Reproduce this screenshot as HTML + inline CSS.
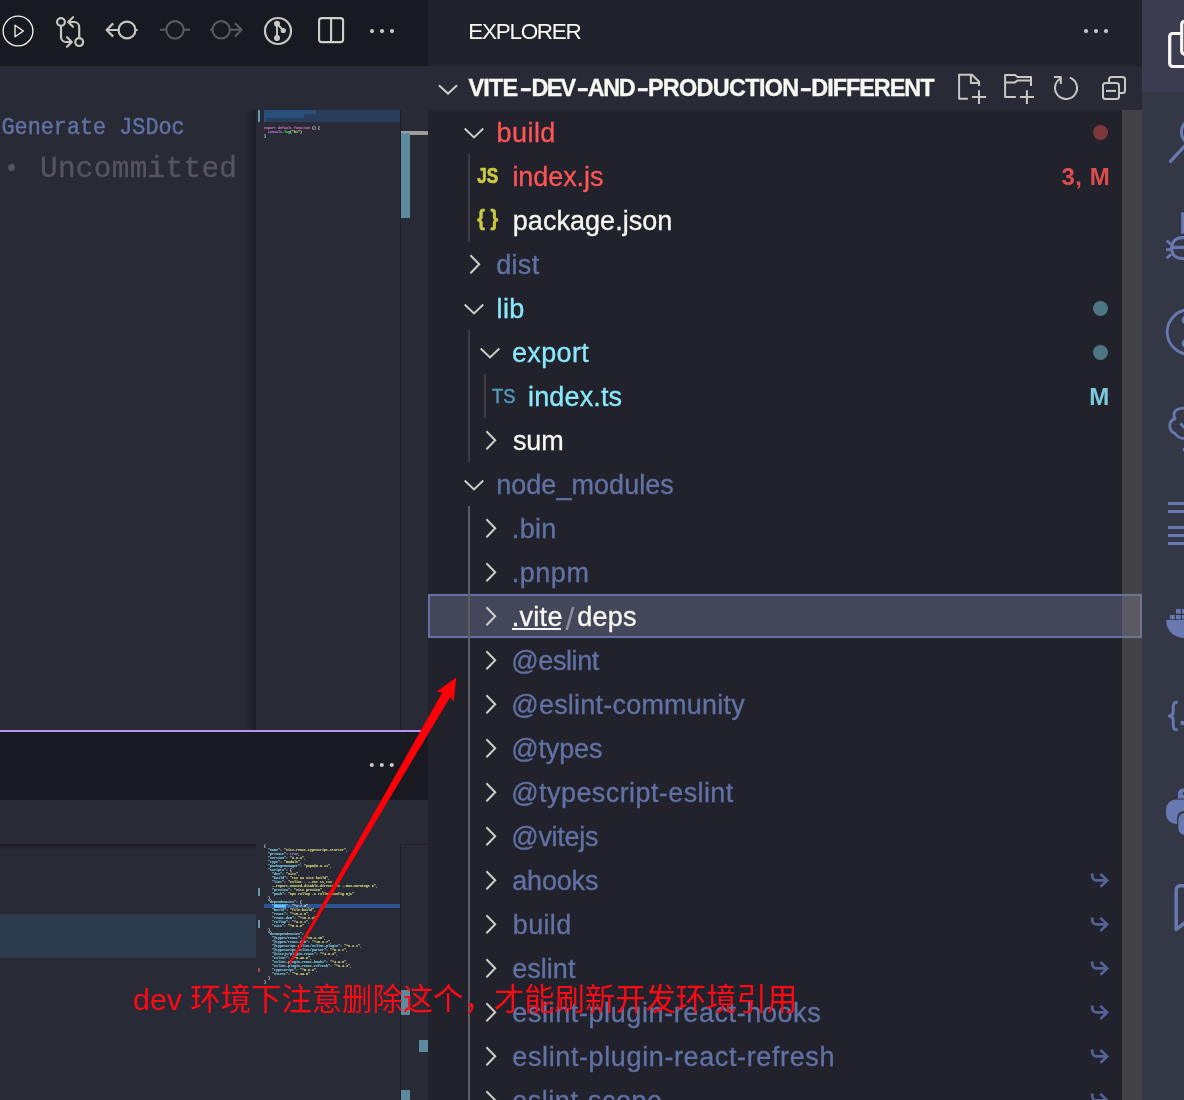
<!DOCTYPE html>
<html lang="zh">
<head>
<meta charset="utf-8">
<title>Explorer - vite-dev-and-production-different</title>
<style>
*{box-sizing:border-box;margin:0;padding:0}
html,body{width:1184px;height:1100px;overflow:hidden;background:#282a36}
body{position:relative;font-family:"Liberation Sans","Noto Sans CJK SC",sans-serif;color:#f8f8f2}
.abs{position:absolute}
#side,#left,#act,#note{will-change:transform}
svg{position:absolute;overflow:visible}
/* ---------- left editor area ---------- */
#left{position:absolute;left:0;top:0;width:428px;height:1100px;background:#282a36;overflow:hidden}
.tabbar{position:absolute;left:0;width:428px;background:#191a21}
.mono{font-family:"Liberation Mono","DejaVu Sans Mono",monospace;white-space:pre}
.codelens{-webkit-text-stroke:.4px;position:absolute;left:1.5px;top:114px;font-size:21.8px;line-height:26px;color:#6272a4;transform:scaleY(1.1);transform-origin:0 0}
.blame{-webkit-text-stroke:.3px;position:absolute;left:40px;top:153px;font-size:29.4px;line-height:34px;color:#55565f;letter-spacing:.3px}
.bullet{position:absolute;left:4px;top:152.8px;font-size:25px;line-height:34px;color:#55565f}
.mm{position:absolute;left:264px;font-size:3.34px;line-height:4px;height:4px;font-weight:bold}
.mm b{font-weight:bold}
.k{color:#8be9fd}.s{color:#f1fa8c}.p{color:#ff79c6}.v{color:#bd93f9}.g{color:#50fa7b}.w{color:#f8f8f2}
.mark{position:absolute;background:#5d8a9e}
/* ---------- sidebar ---------- */
#side{position:absolute;left:428px;top:0;width:714px;height:1100px;background:#21222c;overflow:hidden}
#side .title{position:absolute;left:40.3px;top:18.6px;font-size:22.5px;line-height:26px;letter-spacing:-1.3px;color:#f8f8f2;white-space:pre}
#side .sect{position:absolute;left:0;top:66px;width:714px;height:44px;background:#282a36}
#side .sect .name{position:absolute;left:0;top:9.3px;height:26px;font-size:23.4px;line-height:26px;font-weight:bold;color:#f8f8f2;white-space:pre}
#side .sect .name span{position:absolute;top:0;-webkit-text-stroke:.35px}
#side .sect .name .hy{display:inline-block;transform:scaleX(1.55);transform-origin:50% 50%}
.row{position:absolute;left:0;width:714px;height:44px;font-size:27px;line-height:44px;white-space:pre}
.row .lb{position:absolute;top:.5px;height:44px;-webkit-text-stroke:.3px}
.row .rt{position:absolute;top:.5px;height:44px;font-size:24px;font-weight:bold;opacity:.85}
.row.sel{background:#44475a;border:2px solid #6272a4}
.c-red{color:#ff5555}.c-cy{color:#8be9fd}.c-ig{color:#6272a4}.c-fg{color:#f8f8f2}
.guide{position:absolute;width:2px;background:#3d3d43}
.guide.on{background:#5f5f61}
.dot{position:absolute;left:664.5px;top:14.5px;width:15px;height:15px;border-radius:50%}
.sbar{position:absolute;left:694px;top:110px;width:20px;height:990px;background:rgba(127,123,120,.37)}
/* ---------- activity bar ---------- */
#act{position:absolute;left:1142px;top:0;width:42px;height:1100px;background:#343746;overflow:hidden}
#act .cur{position:absolute;left:0;top:0;width:42px;height:92px;background:#3c3d51}
/* ---------- annotation overlay ---------- */
#note{position:absolute;left:133.2px;top:979.5px;font-size:30.35px;line-height:40px;color:#ff0a14;white-space:pre;font-weight:400;font-family:"Liberation Sans","Noto Sans CJK SC",sans-serif}
</style>
</head>
<body>
<div id="left">
<div class="tabbar" style="top:0;height:66px"></div>
<svg width="428" height="66" viewBox="0 0 428 66" style="left:0;top:0" fill="none" stroke-linecap="round" stroke-linejoin="round">
<g stroke="#f8f8f2" stroke-width="1.3"><circle cx="18" cy="31" r="14.9"/><path d="M15 25.2V36.8L23.4 31Z"/></g>
<g stroke="#c6c6c2" stroke-width="2.2"><circle cx="61" cy="22" r="3.9"/><circle cx="79.2" cy="42.1" r="3.9"/><path d="M61 26.5V37a5 5 0 0 0 5 5H71M67 37.2L71.8 42L67 46.8"/><path d="M79.2 37.6V27a5 5 0 0 0-5-5H69M73 17.2L68.2 22L73 26.8"/></g>
<g stroke="#c6c6c2" stroke-width="2.2"><circle cx="127" cy="30" r="8.4"/><path d="M107 30H118.5M113.2 23.4L106.6 30L113.2 36.6M135.6 30H137.6" stroke-linecap="butt"/></g>
<g stroke="#5a5a60" stroke-width="2.1"><circle cx="175" cy="29.8" r="8.7"/><path d="M160 29.8H166M184 29.8H190" stroke-linecap="butt"/></g>
<g stroke="#5a5a60" stroke-width="2.1"><circle cx="221.2" cy="29.8" r="8.7"/><path d="M210 29.8H212.4M230 29.8H241M235 23.2L241.6 29.8L235 36.4" stroke-linecap="butt"/></g>
<g stroke="#c8c8c4" stroke-width="2.2"><circle cx="278" cy="31" r="13"/><path d="M277 23.7V38M277 23.7L283.3 30.5" stroke-width="1.9"/><g fill="#c8c8c4" stroke="none"><circle cx="277" cy="23.7" r="3"/><circle cx="277" cy="38" r="3"/><circle cx="283.3" cy="30.5" r="2.6"/></g></g>
<g stroke="#d0d0cc" stroke-width="2.1"><rect x="319.1" y="18.1" width="24" height="24" rx="2.6"/><path d="M331.1 18.1V42.1"/></g>
<g fill="#c8c8c8"><circle cx="372" cy="31.1" r="2.1"/><circle cx="382" cy="31.1" r="2.1"/><circle cx="392" cy="31.1" r="2.1"/></g>
</svg>
<div class="mono codelens">Generate JSDoc</div>
<div class="mono bullet">•</div><div class="mono blame">Uncommitted</div>
<div class="abs" style="left:244px;top:110px;width:12px;height:620px;background:linear-gradient(to right,rgba(0,0,0,0),rgba(0,0,0,.32))"></div>
<div class="abs" style="left:264px;top:110px;width:136px;height:12px;background:#2a3e5c"></div>
<div class="abs" style="left:264px;top:110px;width:52px;height:4px;background:#28507d"></div>
<div class="abs" style="left:264px;top:114px;width:40px;height:4px;background:#28507d"></div>
<div class="abs" style="left:264px;top:118px;width:2px;height:4px;background:#28507d"></div>
<div class="abs" style="left:258px;top:110px;width:2px;height:12px;background:#5f9ab0"></div>
<div class="mono mm" style="top:126px"><b class="p">export default function</b><b class="w"> () {</b></div>
<div class="mono mm" style="top:130px"><b class="w">  </b><b class="v">console</b><b class="w">.</b><b class="g">log</b><b class="w">(</b><b class="s">&quot;hi&quot;</b><b class="w">)</b></div>
<div class="mono mm" style="top:134px"><b class="w">}</b></div>
<div class="abs" style="left:400px;top:110px;width:1px;height:620px;background:#1e1f29"></div>
<div class="abs" style="left:401px;top:131px;width:27px;height:4px;background:#9d9d9d"></div>
<div class="mark" style="left:401px;top:133px;width:9px;height:85px"></div>
<div class="abs" style="left:0;top:730px;width:428px;height:2px;background:#bd93f9"></div>
<div class="tabbar" style="top:732px;height:68px"></div>
<svg width="40" height="10" viewBox="0 0 40 10" style="left:362px;top:760px"><g fill="#c8c8c8"><circle cx="9.8" cy="5" r="2.1"/><circle cx="19.8" cy="5" r="2.1"/><circle cx="29.8" cy="5" r="2.1"/></g></svg>
<div class="abs" style="left:0;top:844px;width:256px;height:6px;background:linear-gradient(to bottom,rgba(0,0,0,.38),rgba(0,0,0,0))"></div>
<div class="abs" style="left:0;top:914px;width:256px;height:44px;background:#2c3c4c"></div>
<div class="abs" style="left:264px;top:904px;width:136px;height:4px;background:#2d5594"></div>
<div class="abs" style="left:274px;top:904px;width:12px;height:4px;background:#4a9af0"></div>
<div class="abs" style="left:258px;top:888px;width:2px;height:8px;background:#5f9ab0"></div>
<div class="abs" style="left:258px;top:920px;width:2px;height:8px;background:#5f9ab0"></div>
<div class="abs" style="left:258px;top:968px;width:2px;height:4px;background:#a04a50"></div>
<div class="mono mm" style="top:844px"><b class="w">{</b></div>
<div class="mono mm" style="top:848px"><b class="w">  </b><b class="k">&quot;name&quot;</b><b class="w">: </b><b class="s">&quot;vite-react-typescript-starter&quot;</b><b class="w">,</b></div>
<div class="mono mm" style="top:852px"><b class="w">  </b><b class="k">&quot;private&quot;</b><b class="w">: </b><b class="v">true</b><b class="w">,</b></div>
<div class="mono mm" style="top:856px"><b class="w">  </b><b class="k">&quot;version&quot;</b><b class="w">: </b><b class="s">&quot;0.0.0&quot;</b><b class="w">,</b></div>
<div class="mono mm" style="top:860px"><b class="w">  </b><b class="k">&quot;type&quot;</b><b class="w">: </b><b class="s">&quot;module&quot;</b><b class="w">,</b></div>
<div class="mono mm" style="top:864px"><b class="w">  </b><b class="k">&quot;packageManager&quot;</b><b class="w">: </b><b class="s">&quot;pnpm@8.6.11&quot;</b><b class="w">,</b></div>
<div class="mono mm" style="top:868px"><b class="w">  </b><b class="k">&quot;scripts&quot;</b><b class="w">: {</b></div>
<div class="mono mm" style="top:872px"><b class="w">    </b><b class="k">&quot;dev&quot;</b><b class="w">: </b><b class="s">&quot;vite&quot;</b><b class="w">,</b></div>
<div class="mono mm" style="top:876px"><b class="w">    </b><b class="k">&quot;build&quot;</b><b class="w">: </b><b class="s">&quot;tsc &amp;&amp; vite build&quot;</b><b class="w">,</b></div>
<div class="mono mm" style="top:880px"><b class="w">    </b><b class="k">&quot;lint&quot;</b><b class="w">: </b><b class="s">&quot;eslint . --ext ts,tsx</b></div>
<div class="mono mm" style="top:884px"><b class="w">    </b><b class="s">--report-unused-disable-directives --max-warnings 0&quot;</b><b class="w">,</b></div>
<div class="mono mm" style="top:888px"><b class="w">    </b><b class="k">&quot;preview&quot;</b><b class="w">: </b><b class="s">&quot;vite preview&quot;</b><b class="w">,</b></div>
<div class="mono mm" style="top:892px"><b class="w">    </b><b class="k">&quot;pack&quot;</b><b class="w">: </b><b class="s">&quot;npx rollup -c rollup.config.mjs&quot;</b></div>
<div class="mono mm" style="top:896px"><b class="w">  },</b></div>
<div class="mono mm" style="top:900px"><b class="w">  </b><b class="k">&quot;dependencies&quot;</b><b class="w">: {</b></div>
<div class="mono mm" style="top:904px"><b class="w">    </b><b class="k">&quot;ahooks&quot;</b><b class="w">: </b><b class="s">&quot;^3.7.8&quot;</b><b class="w">,</b></div>
<div class="mono mm" style="top:908px"><b class="w">    </b><b class="k">&quot;build&quot;</b><b class="w">: </b><b class="s">&quot;file:build&quot;</b><b class="w">,</b></div>
<div class="mono mm" style="top:912px"><b class="w">    </b><b class="k">&quot;react&quot;</b><b class="w">: </b><b class="s">&quot;^18.2.0&quot;</b><b class="w">,</b></div>
<div class="mono mm" style="top:916px"><b class="w">    </b><b class="k">&quot;react-dom&quot;</b><b class="w">: </b><b class="s">&quot;^18.2.0&quot;</b><b class="w">,</b></div>
<div class="mono mm" style="top:920px"><b class="w">    </b><b class="k">&quot;rollup&quot;</b><b class="w">: </b><b class="s">&quot;^4.6.1&quot;</b><b class="w">,</b></div>
<div class="mono mm" style="top:924px"><b class="w">    </b><b class="k">&quot;vite&quot;</b><b class="w">: </b><b class="s">&quot;^5.0.8&quot;</b></div>
<div class="mono mm" style="top:928px"><b class="w">  },</b></div>
<div class="mono mm" style="top:932px"><b class="w">  </b><b class="k">&quot;devDependencies&quot;</b><b class="w">: {</b></div>
<div class="mono mm" style="top:936px"><b class="w">    </b><b class="k">&quot;@types/react&quot;</b><b class="w">: </b><b class="s">&quot;^18.2.15&quot;</b><b class="w">,</b></div>
<div class="mono mm" style="top:940px"><b class="w">    </b><b class="k">&quot;@types/react-dom&quot;</b><b class="w">: </b><b class="s">&quot;^18.2.7&quot;</b><b class="w">,</b></div>
<div class="mono mm" style="top:944px"><b class="w">    </b><b class="k">&quot;@typescript-eslint/eslint-plugin&quot;</b><b class="w">: </b><b class="s">&quot;^6.2.1&quot;</b><b class="w">,</b></div>
<div class="mono mm" style="top:948px"><b class="w">    </b><b class="k">&quot;@typescript-eslint/parser&quot;</b><b class="w">: </b><b class="s">&quot;^6.2.1&quot;</b><b class="w">,</b></div>
<div class="mono mm" style="top:952px"><b class="w">    </b><b class="k">&quot;@vitejs/plugin-react&quot;</b><b class="w">: </b><b class="s">&quot;^4.0.4&quot;</b><b class="w">,</b></div>
<div class="mono mm" style="top:956px"><b class="w">    </b><b class="k">&quot;eslint&quot;</b><b class="w">: </b><b class="s">&quot;^8.46.0&quot;</b><b class="w">,</b></div>
<div class="mono mm" style="top:960px"><b class="w">    </b><b class="k">&quot;eslint-plugin-react-hooks&quot;</b><b class="w">: </b><b class="s">&quot;^4.6.0&quot;</b><b class="w">,</b></div>
<div class="mono mm" style="top:964px"><b class="w">    </b><b class="k">&quot;eslint-plugin-react-refresh&quot;</b><b class="w">: </b><b class="s">&quot;^0.4.3&quot;</b><b class="w">,</b></div>
<div class="mono mm" style="top:968px"><b class="w">    </b><b class="k">&quot;typescript&quot;</b><b class="w">: </b><b class="s">&quot;^5.0.2&quot;</b><b class="w">,</b></div>
<div class="mono mm" style="top:972px"><b class="w">    </b><b class="k">&quot;vitest&quot;</b><b class="w">: </b><b class="s">&quot;^0.34.6&quot;</b></div>
<div class="mono mm" style="top:976px"><b class="w">  }</b></div>
<div class="mono mm" style="top:980px"><b class="w">}</b></div>
<div class="abs" style="left:400px;top:844px;width:1px;height:256px;background:#1e1f29"></div>
<div class="abs" style="left:400px;top:844px;width:28px;height:1px;background:#20212b"></div>
<div class="mark" style="left:401px;top:990px;width:9px;height:25px"></div>
<div class="mark" style="left:419px;top:1040px;width:9px;height:12px"></div>
<div class="mark" style="left:401px;top:1090px;width:9px;height:10px"></div>
</div>
<div id="side">
<div class="title">EXPLORER</div>
<div class="sect"><div class="name"><span style="left:40.4px;letter-spacing:-0.796px">VITE</span><span class="hy" style="left:93.75px">-</span><span style="left:103.4px;letter-spacing:-1.647px">DEV</span><span class="hy" style="left:151.3px">-</span><span style="left:159.7px;letter-spacing:-1.342px">AND</span><span class="hy" style="left:210.6px">-</span><span style="left:219.9px;letter-spacing:-0.66px">PRODUCTION</span><span class="hy" style="left:374.4px">-</span><span style="left:383.3px;letter-spacing:-1.007px">DIFFERENT</span></div></div>
<div class="row" style="top:110px"><span class="lb c-red" style="left:68.6px;letter-spacing:0.418px">build</span><i class="dot" style="background:rgba(255,85,85,.42)"></i></div>
<div class="row" style="top:154px"><span class="lb c-red" style="left:84.4px;letter-spacing:-0.064px">index.js</span><span class="rt c-red" style="left:633.4px;letter-spacing:.6px">3, M</span></div>
<div class="row" style="top:198px"><span class="lb c-fg" style="left:84.8px;letter-spacing:0.037px">package.json</span></div>
<div class="row" style="top:242px"><span class="lb c-ig" style="left:68.2px;letter-spacing:0.328px">dist</span></div>
<div class="row" style="top:286px"><span class="lb c-cy" style="left:68.6px;letter-spacing:0.351px">lib</span><i class="dot" style="background:rgba(139,233,253,.42)"></i></div>
<div class="row" style="top:330px"><span class="lb c-cy" style="left:84px;letter-spacing:0.332px">export</span><i class="dot" style="background:rgba(139,233,253,.42)"></i></div>
<div class="row" style="top:374px"><span class="lb c-cy" style="left:100px;letter-spacing:0.15px">index.ts</span><span class="rt c-cy" style="left:661.2px">M</span></div>
<div class="row" style="top:418px"><span class="lb c-fg" style="left:85px;letter-spacing:-0.158px">sum</span></div>
<div class="row" style="top:462px"><span class="lb c-ig" style="left:68.2px;letter-spacing:0.042px">node_modules</span></div>
<div class="row" style="top:506px"><span class="lb c-ig" style="left:83.8px;letter-spacing:0.328px">.bin</span></div>
<div class="row" style="top:550px"><span class="lb c-ig" style="left:83.8px;letter-spacing:0.513px">.pnpm</span></div>
<div class="row sel" style="top:594px"><span class="lb c-fg" style="left:81.8px;top:-1.5px;letter-spacing:0.275px">.vite</span><span class="lb" style="left:135.4px;top:1px;font-size:32px;-webkit-text-stroke:0;color:#8f909c">/</span><span class="lb c-fg" style="left:147.2px;top:-1.5px;letter-spacing:0.251px">deps</span><i class="abs" style="left:82.4px;top:32px;width:49px;height:2px;background:#f8f8f2"></i></div>
<div class="row" style="top:638px"><span class="lb c-ig" style="left:83.3px;letter-spacing:-0.406px">@eslint</span></div>
<div class="row" style="top:682px"><span class="lb c-ig" style="left:83.3px;letter-spacing:0.215px">@eslint-community</span></div>
<div class="row" style="top:726px"><span class="lb c-ig" style="left:83.3px;letter-spacing:-0.168px">@types</span></div>
<div class="row" style="top:770px"><span class="lb c-ig" style="left:83.3px;letter-spacing:0.414px">@typescript-eslint</span></div>
<div class="row" style="top:814px"><span class="lb c-ig" style="left:83.3px;letter-spacing:-0.304px">@vitejs</span></div>
<div class="row" style="top:858px"><span class="lb c-ig" style="left:84.3px;letter-spacing:-0.193px">ahooks</span></div>
<div class="row" style="top:902px"><span class="lb c-ig" style="left:84.8px;letter-spacing:0.343px">build</span></div>
<div class="row" style="top:946px"><span class="lb c-ig" style="left:84.3px;letter-spacing:0.014px">eslint</span></div>
<div class="row" style="top:990px"><span class="lb c-ig" style="left:84.3px;letter-spacing:0.594px">eslint-plugin-react-hooks</span></div>
<div class="row" style="top:1034px"><span class="lb c-ig" style="left:84.3px;letter-spacing:0.615px">eslint-plugin-react-refresh</span></div>
<div class="row" style="top:1078px"><span class="lb c-ig" style="left:84.3px;letter-spacing:0.513px">eslint-scope</span></div>
<i class="guide" style="left:40px;top:154px;height:88px"></i>
<i class="guide" style="left:40px;top:330px;height:132px"></i>
<i class="guide" style="left:56px;top:374px;height:44px"></i>
<i class="guide on" style="left:40px;top:506px;height:594px"></i>
<svg width="714" height="1100" viewBox="428 0 714 1100" style="left:0;top:0" fill="none" stroke="#cdcdc9" stroke-width="2" stroke-linecap="butt" stroke-linejoin="miter">
<path d="M438.9 85.3L448 93.6L457.1 85.3"/>
<path d="M464.7 128.6L474 137.4L483.3 128.6"/>
<path d="M470.4 255.2L479.2 264.2L470.4 273.2"/>
<path d="M464.7 304.6L474 313.4L483.3 304.6"/>
<path d="M480.7 348.6L490 357.4L499.3 348.6"/>
<path d="M486.4 431.2L495.2 440.2L486.4 449.2"/>
<path d="M464.7 480.6L474 489.4L483.3 480.6"/>
<path d="M486.4 519.2L495.2 528.2L486.4 537.2"/>
<path d="M486.4 563.2L495.2 572.2L486.4 581.2"/>
<path d="M486.4 607.2L495.2 616.2L486.4 625.2"/>
<path d="M486.4 651.2L495.2 660.2L486.4 669.2"/>
<path d="M486.4 695.2L495.2 704.2L486.4 713.2"/>
<path d="M486.4 739.2L495.2 748.2L486.4 757.2"/>
<path d="M486.4 783.2L495.2 792.2L486.4 801.2"/>
<path d="M486.4 827.2L495.2 836.2L486.4 845.2"/>
<path d="M486.4 871.2L495.2 880.2L486.4 889.2"/>
<path stroke="#56639b" stroke-width="2.6" d="M1092.2 873.4V876a4.4 4.4 0 0 0 4.4 4.4H1106.6M1100.4 873.9L1107.2 880.4L1100.4 886.9"/>
<path d="M486.4 915.2L495.2 924.2L486.4 933.2"/>
<path stroke="#56639b" stroke-width="2.6" d="M1092.2 917.4V920a4.4 4.4 0 0 0 4.4 4.4H1106.6M1100.4 917.9L1107.2 924.4L1100.4 930.9"/>
<path d="M486.4 959.2L495.2 968.2L486.4 977.2"/>
<path stroke="#56639b" stroke-width="2.6" d="M1092.2 961.4V964a4.4 4.4 0 0 0 4.4 4.4H1106.6M1100.4 961.9L1107.2 968.4L1100.4 974.9"/>
<path d="M486.4 1003.2L495.2 1012.2L486.4 1021.2"/>
<path stroke="#56639b" stroke-width="2.6" d="M1092.2 1005.4V1008a4.4 4.4 0 0 0 4.4 4.4H1106.6M1100.4 1005.9L1107.2 1012.4L1100.4 1018.9"/>
<path d="M486.4 1047.2L495.2 1056.2L486.4 1065.2"/>
<path stroke="#56639b" stroke-width="2.6" d="M1092.2 1049.4V1052a4.4 4.4 0 0 0 4.4 4.4H1106.6M1100.4 1049.9L1107.2 1056.4L1100.4 1062.9"/>
<path d="M486.4 1091.2L495.2 1100.2L486.4 1109.2"/>
<path stroke="#56639b" stroke-width="2.6" d="M1092.2 1093.4V1096a4.4 4.4 0 0 0 4.4 4.4H1106.6M1100.4 1093.9L1107.2 1100.4L1100.4 1106.9"/>
<text x="477.3" y="183" font-family="Liberation Sans,sans-serif" font-weight="bold" font-size="21.6" textLength="20.9" lengthAdjust="spacingAndGlyphs" fill="#cbcb41" stroke="#cbcb41" stroke-width=".7" stroke-linejoin="round">JS</text>
<text x="477.3" y="225.2" font-family="Liberation Sans,sans-serif" font-weight="bold" font-size="21.5" textLength="20.8" lengthAdjust="spacingAndGlyphs" fill="#cbcb41" stroke="#cbcb41" stroke-width=".6" stroke-linejoin="round">{ }</text>
<text x="492.1" y="403.4" font-family="Liberation Sans,sans-serif" font-size="20.4" textLength="23.3" lengthAdjust="spacingAndGlyphs" fill="#519aba" stroke="#519aba" stroke-width=".5">TS</text>
<g fill="#c8c8c8" stroke="none"><circle cx="1086" cy="31.1" r="2.1"/><circle cx="1096" cy="31.1" r="2.1"/><circle cx="1106" cy="31.1" r="2.1"/></g>
<g stroke="#c8c8c4" stroke-width="2" stroke-linejoin="round">
<path d="M967.9 98.8H959.1V74.7H972L979.1 81.7V85.9M970.9 74.7V82.9H979.1M979 90.2V104M972 97H986.1"/>
<path d="M1015.9 97H1005.1V75.1H1015.1L1017.4 77H1031V85.9M1005.1 82.6H1014.8L1017.4 80.4H1031M1026.9 90.2V104M1020 97H1034"/>
<path d="M1069.8 77.6A11 11 0 1 1 1060.4 78.5M1053.9 77H1060.8V84"/>
<path d="M1109 82.4V79.4a2.5 2.5 0 0 1 2.5-2.5H1122.5a2.5 2.5 0 0 1 2.5 2.5V90.5a2.5 2.5 0 0 1-2.5 2.5H1119.6"/><rect x="1103" y="83" width="16" height="16" rx="2.5"/><path d="M1106 90.9H1116"/>
</g>
</svg>
<div class="sbar"></div>
</div>
<div id="act">
<div class="cur"></div>
<svg width="42" height="1100" viewBox="1142 0 42 1100" style="left:0;top:0" fill="none" stroke="#6779b0" stroke-width="3" stroke-linecap="butt" stroke-linejoin="round">
<g stroke="#f8f8f2" stroke-width="3.2"><path d="M1181 33.5H1172.7a3 3 0 0 0-3 3V63.5a3 3 0 0 0 3 3H1190"/><path d="M1190 21.2H1184.7a3 3 0 0 0-3 3V51a3.4 3.4 0 0 0 3.4 3.4H1190"/></g>
<circle cx="1195" cy="132" r="13.5"/><path d="M1169.6 162.4L1185 145.6" stroke-width="3.2"/>
<path d="M1182.7 212.3V233.6" stroke-width="3"/>
<g stroke-width="3.1"><path d="M1190 237.6H1182.6C1175.6 237.6 1171.6 242 1171.6 248.2C1171.6 254.4 1175.6 258.6 1182.6 258.6H1190M1173 247.4H1190"/><path stroke-width="2.8" d="M1166 249.6H1170.4M1166.8 240.4L1170.8 244.2M1166.8 258.2L1171 254.2"/></g>
<circle cx="1189.6" cy="332" r="22.4" stroke-width="2.8"/><g fill="#6779b0" stroke="none"><circle cx="1186" cy="320" r="4.3"/><circle cx="1186" cy="343.4" r="4.3"/></g>
<g stroke-width="2.8"><path d="M1186 408.2C1180 408 1175 409.6 1174 413.6C1173.6 416 1174.6 417.6 1175 418.6C1171 420 1169.6 423 1169.8 426.4C1170 430 1172 432 1174 432.8C1176 434 1177.6 437.4 1180.6 438C1182 438.4 1184 438.4 1186 438.2M1180.4 423.4L1186 429.4"/></g><circle cx="1184.6" cy="449.6" r="2" fill="#6779b0" stroke="none"/>
<g fill="#6779b0" stroke="none"><rect x="1168" y="502" width="20" height="3"/><rect x="1168" y="510" width="20" height="3"/><rect x="1168" y="526" width="20" height="3"/><rect x="1168" y="534" width="20" height="3"/><rect x="1168" y="542" width="20" height="3"/>
<path d="M1166 620H1190V638H1184C1174 637.6 1166.4 631 1166 620Z"/><rect x="1176" y="609" width="4.8" height="4.6"/><rect x="1182" y="609" width="4.8" height="4.6"/><rect x="1170" y="615" width="4.8" height="4.2"/><rect x="1176" y="615" width="4.8" height="4.2"/><rect x="1182" y="615" width="4.8" height="4.2"/>
<rect x="1180.6" y="721" width="4" height="4"/>
<path d="M1178 798.6V793.6a5 5 0 0 1 5-5H1190V798.6Z"/><path d="M1190 799.5H1176a10 10 0 0 0-10 10V814a10 10 0 0 0 10 10H1177V818a7 7 0 0 1 7-7H1190Z"/><path d="M1190 813H1185.3a7 7 0 0 0-7 7V828a7 7 0 0 0 7 7H1190Z"/></g>
<circle cx="1184.2" cy="793.6" r="1.6" fill="#343746" stroke="none"/>
<path d="M1177.8 702.2C1174 702 1173.2 704 1173.2 707V712C1173.2 714.6 1172 715.6 1169.4 716C1172 716.4 1173.2 717.4 1173.2 720V725C1173.2 728 1174 730 1177.8 729.8" stroke-width="2.9"/>
<path d="M1190 885.8H1180.2a4 4 0 0 0-4 4V929.4L1186 922" stroke-width="3.5" stroke-linecap="round"/>
</svg>
</div>
<svg width="1184" height="1100" viewBox="0 0 1184 1100" style="left:0;top:0;pointer-events:none"><path fill="#ff0008" d="M288.8 963.6L442.2 692.7L436.7 691.4L456.2 677.6L453.8 701.5L450.2 697L290.4 964.4Z"/></svg>
<div id="note">dev 环境下注意删除这个，才能刷新开发环境引用</div>
</body>
</html>
